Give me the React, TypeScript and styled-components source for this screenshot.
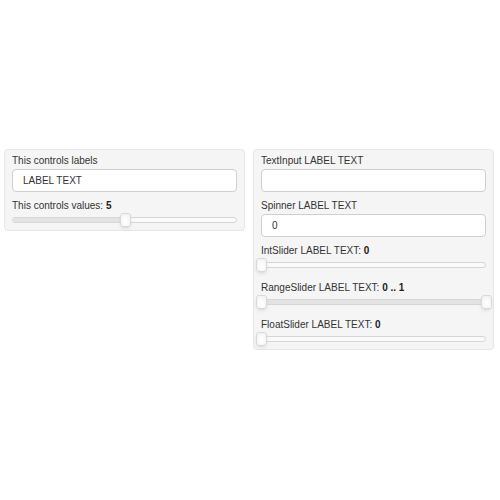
import React from "react";
import styled, { createGlobalStyle } from "styled-components";

const Global = createGlobalStyle`
  html, body { margin: 0; padding: 0; background: #ffffff; }
  body { font-family: "Liberation Sans", Arial, Helvetica, sans-serif; }
  * { box-sizing: border-box; }
`;

const Page = styled.div`
  display: flex;
  flex-direction: row;
  align-items: flex-start;
  gap: 8px;
  padding: 149px 0 0 4px;
  width: 500px;
  height: 500px;
`;

const Panel = styled.div`
  width: 241px;
  background: #f5f5f5;
  border: 1px solid #e6e6e6;
  border-radius: 4px;
  padding: 5px 7px 1px 7px;
  display: flex;
  flex-direction: column;
  gap: 8px;
`;

const Field = styled.div`
  display: flex;
  flex-direction: column;
`;

const Label = styled.div<{ $gap?: number }>`
  font-size: 10px;
  line-height: 12px;
  height: 12px;
  color: #333333;
  white-space: nowrap;
  margin-bottom: ${(p) => p.$gap ?? 0}px;
  b { font-weight: bold; color: #222222; }
`;

const TextBox = styled.input`
  display: block;
  width: 100%;
  height: 23px;
  margin: 0;
  padding: 0 10px;
  border: 1px solid #cfcfcf;
  border-radius: 4px;
  background: #ffffff;
  font-family: "Liberation Sans", Arial, Helvetica, sans-serif;
  font-size: 10px;
  color: #333333;
  outline: none;
`;

const SliderArea = styled.div`
  position: relative;
  height: 17px;
`;

const Track = styled.div`
  position: absolute;
  left: 0;
  right: 0;
  top: 5px;
  height: 6px;
  background: #fafafa;
  border: 1px solid #d6d6d6;
  border-radius: 4px;
  overflow: hidden;
`;

const Connect = styled.div`
  position: absolute;
  top: 0;
  bottom: 0;
  background: #e3e3e3;
`;

const Handle = styled.div`
  position: absolute;
  top: 1px;
  width: 11px;
  height: 14px;
  margin-left: -5px;
  background: #ffffff;
  border: 1px solid #d9d9d9;
  border-radius: 3px;
  box-shadow: inset 0 0 1px #ffffff, inset 0 1px 5px #ebebeb, 0 2px 4px -2px #bbbbbb;
`;

type SliderProps = { from: number; to: number; range?: boolean; start?: number };

function Slider({ from, to, range, start = 0 }: SliderProps) {
  const a = range ? from : start;
  return (
    <SliderArea>
      <Track>
        <Connect style={{ left: `${a * 100}%`, width: `${(to - a) * 100}%` }} />
      </Track>
      {range && <Handle style={{ left: `${from * 100}%` }} />}
      <Handle style={{ left: `${to * 100}%` }} />
    </SliderArea>
  );
}

export default function App() {
  return (
    <>
      <Global />
      <Page>
        <Panel>
          <Field>
            <Label $gap={2}>This controls labels</Label>
            <TextBox readOnly value="LABEL TEXT" />
          </Field>
          <Field>
            <Label>
              This controls values: <b>5</b>
            </Label>
            <Slider from={0} to={0.5} />
          </Field>
        </Panel>
        <Panel>
          <Field>
            <Label $gap={2}>TextInput LABEL TEXT</Label>
            <TextBox readOnly value="" />
          </Field>
          <Field>
            <Label $gap={2}>Spinner LABEL TEXT</Label>
            <TextBox readOnly value="0" />
          </Field>
          <Field>
            <Label>
              IntSlider LABEL TEXT: <b>0</b>
            </Label>
            <Slider from={0} to={0} />
          </Field>
          <Field>
            <Label>
              RangeSlider LABEL TEXT: <b>0 .. 1</b>
            </Label>
            <Slider from={0} to={1} range />
          </Field>
          <Field>
            <Label>
              FloatSlider LABEL TEXT: <b>0</b>
            </Label>
            <Slider from={0} to={0} />
          </Field>
        </Panel>
      </Page>
    </>
  );
}
